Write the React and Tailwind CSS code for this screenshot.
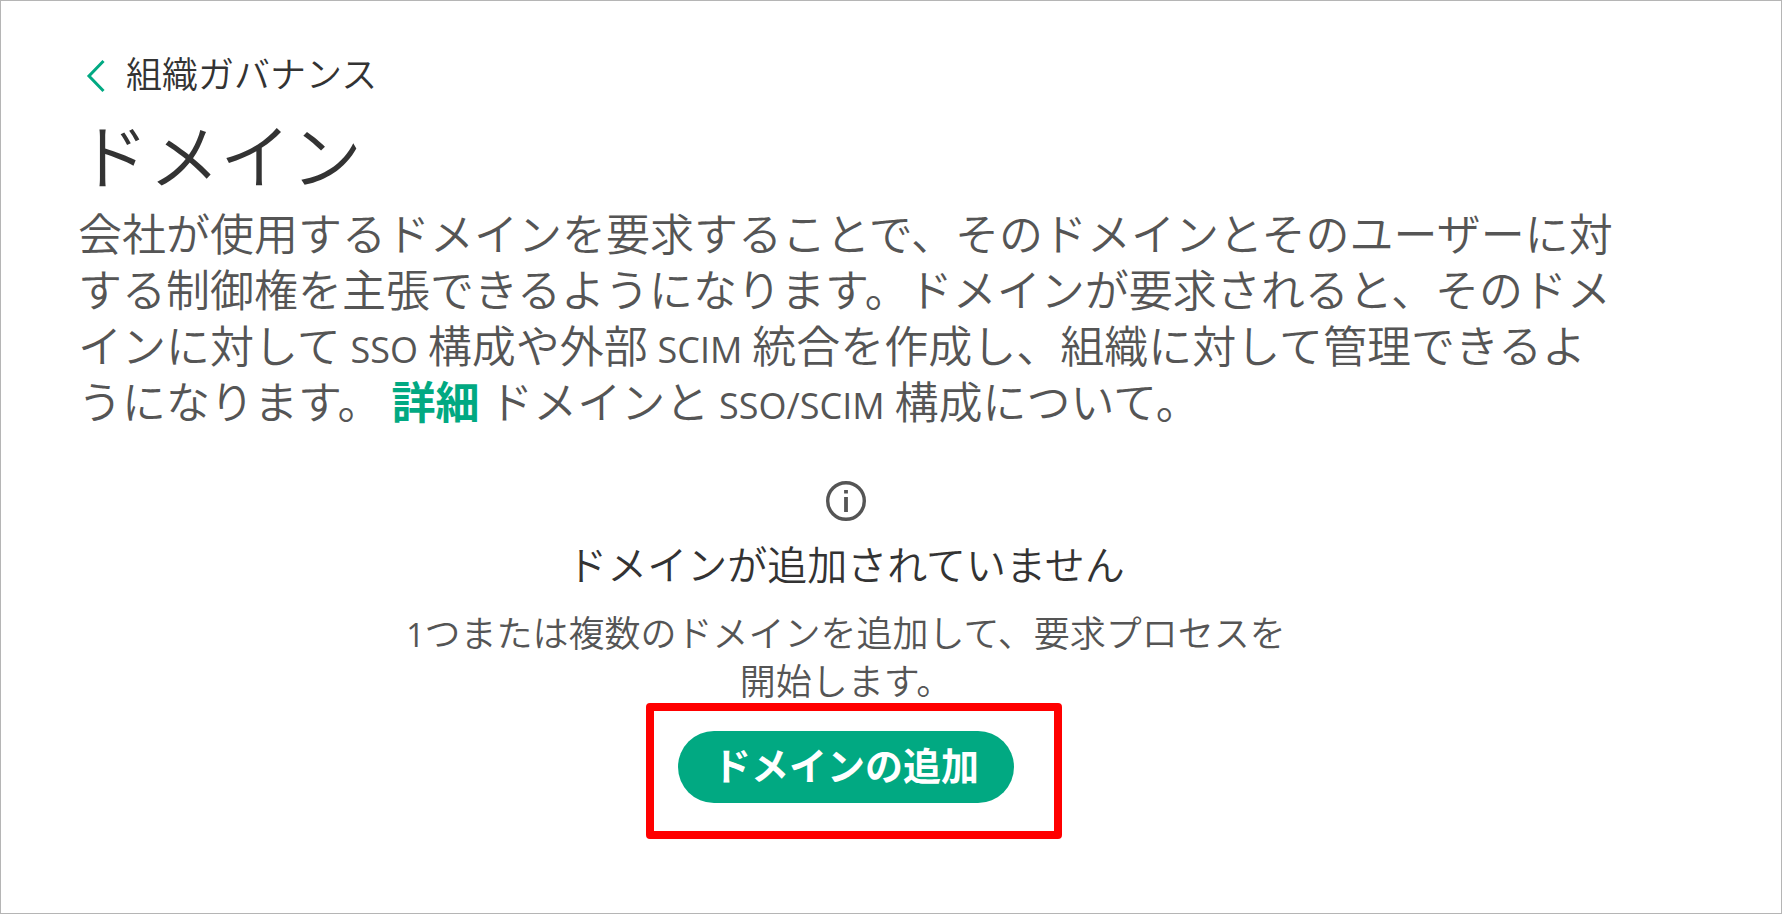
import React from "react";

function Latin({ children }) {
  return <span className="font-['Open_Sans'] text-[36px] leading-none font-normal">{children}</span>;
}

function BackLink() {
  return (
    <a href="#governance" className="flex items-center gap-5 self-start text-[36px] leading-[48px] text-[#333333]">
      <svg width="20" height="34" viewBox="0 0 20 34" fill="none" className="mt-2 ml-2 shrink-0" aria-hidden="true">
        <path d="M17.5 2L3 17L17.5 32" stroke="#01a982" strokeWidth="3" />
      </svg>
      組織ガバナンス
    </a>
  );
}

function InfoIcon() {
  return (
    <svg width="40" height="40" viewBox="0 0 40 40" fill="none" aria-hidden="true">
      <circle cx="20" cy="20" r="18.3" stroke="#555555" strokeWidth="3.4" />
      <path d="M20 9V12.6M20 16V31" stroke="#555555" strokeWidth="3.8" />
    </svg>
  );
}

function EmptyState() {
  return (
    <section className="mt-[53px] flex flex-col items-center pr-1 text-center">
      <InfoIcon />
      <h2 className="mt-[14px] text-[40px] leading-[56px] text-[#333333]">ドメインが追加されていません</h2>
      <p className="mt-4 max-w-[880px] text-[36px] leading-[48px] text-[#555555]">
        <span className="font-['Open_Sans'] text-[32px] leading-none font-normal">1</span>つまたは複数のドメインを追加して、要求プロセスを開始します。
      </p>
      <div className="relative mt-7">
        <button type="button" className="flex h-[72px] items-center rounded-full bg-[#01a982] px-[35px] pb-1.5 text-[38px] leading-[48px] font-bold text-white">
          ドメインの追加
        </button>
        <div className="pointer-events-none absolute -top-7 -right-12 -bottom-9 -left-8 rounded border-8 border-[#ff0000]" />
      </div>
    </section>
  );
}

export default function App() {
  return (
    <main
      lang="ja"
      className="flex min-h-screen flex-col border border-[#b5b5b5] bg-white pt-[47px] pr-[163px] pb-12 pl-[77px] font-['Noto_Sans_CJK_JP',sans-serif] font-[350]"
    >
      <BackLink />
      <h1 className="mt-3 text-[71px] leading-[88px] text-[#333333]">ドメイン</h1>
      <p className="mt-2 text-[44px] leading-[56px] text-[#555555]">
        会社が使用するドメインを要求することで、そのドメインとそのユーザーに対する制御権を主張できるようになります。ドメインが要求されると、そのドメインに対して{" "}
        <Latin>SSO</Latin> 構成や外部 <Latin>SCIM</Latin> 統合を作成し、組織に対して管理できるようになります。{" "}
        <a href="#details" className="font-bold text-[#01a982]">詳細</a> ドメインと <Latin>SSO/SCIM</Latin> 構成について。
      </p>
      <EmptyState />
    </main>
  );
}
